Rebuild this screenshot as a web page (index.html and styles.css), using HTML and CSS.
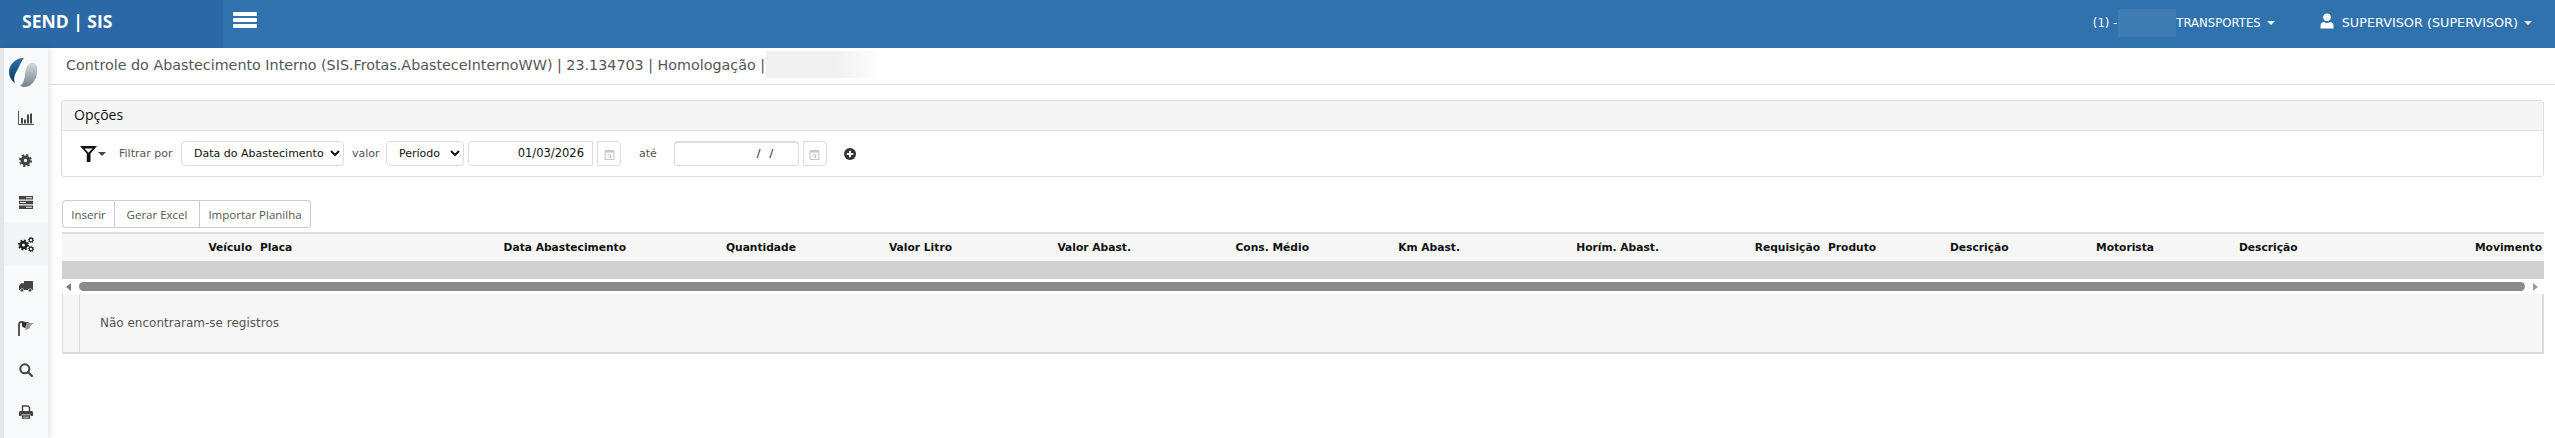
FILE: index.html
```html
<!DOCTYPE html>
<html lang="pt-BR">
<head>
<meta charset="utf-8">
<title>Controle do Abastecimento Interno</title>
<link rel="stylesheet" href="styles.css">
</head>
<body>
<header class="topbar">
  <div class="brand">SEND | SIS</div>
  <div class="burger"><span></span><span></span><span></span></div>
  <div class="top-right">
    <div class="company"><span>(1) -</span><span class="mask"></span><span>TRANSPORTES</span><i class="caret"></i></div>
    <div class="user">
      <svg class="user-icon" viewBox="0 0 14 16"><circle cx="7" cy="4.2" r="3.8" fill="#fff"/><path d="M0.5 15.5v-3c0-2.2 1.8-3.6 3.5-3.6 1 .8 2 1.1 3 1.1s2-.3 3-1.1c1.7 0 3.5 1.4 3.5 3.6v3z" fill="#fff"/></svg>
      <span>SUPERVISOR (SUPERVISOR)</span><i class="caret"></i>
    </div>
  </div>
</header>
<div class="layout">
  <nav class="sidebar">
    <div class="logo">
      <svg viewBox="0 0 28 29" width="28" height="29">
        <defs>
          <linearGradient id="lb" x1="0" y1="0" x2="0" y2="1"><stop offset="0" stop-color="#2f6ea3"/><stop offset="1" stop-color="#0d3a63"/></linearGradient>
          <linearGradient id="lg" x1="0" y1="0" x2="0" y2="1"><stop offset="0" stop-color="#d5dade"/><stop offset="1" stop-color="#74818b"/></linearGradient>
        </defs>
        <path d="M15 0C6 0 0 7 0 14c0 5 3 9 6 11-2-5 0-9 3-14 2-4 3-8 6-11z" fill="url(#lb)"/>
        <path d="M28 9c0-2-3-5-6-4-4 1-5 6-6 11-.5 5-1 9-5 12 2 .5 3 1 4 1 8 0 13-8 13-15z" fill="url(#lg)"/>
      </svg>
    </div>
    <a class="nav-item"><svg viewBox="0 0 16 14" width="16" height="14"><path d="M.5 0v13.500H16" fill="none" stroke="#555" stroke-width="1"/><path d="M3 7h2v5.500H3zM6 8.500h2v4H6zM9 3.500h2v9H9zM12 2.500h2v10h-2z" fill="#444"/></svg></a>
    <a class="nav-item"><svg viewBox="0 0 14 14" width="13" height="13"><circle cx="7" cy="7" r="3.600" fill="none" stroke="#444" stroke-width="3.600"/><circle cx="7" cy="7" r="6" fill="none" stroke="#444" stroke-width="2" stroke-dasharray="2.350 2.360"/></svg></a>
    <a class="nav-item"><svg viewBox="0 0 14 13" width="14" height="13"><path d="M0 0h14v3.500H0zM0 4.800h14v3.400H0zM0 9.500h14V13H0z" fill="#444"/><path d="M7 1.200h6v1H7zM1 6h6v1H1zM7 10.700h6v1H7z" fill="#f8f9fb"/></svg></a>
    <a class="nav-item active"><svg viewBox="0 0 16 15" width="16" height="15"><circle cx="5.500" cy="8" r="2.900" fill="none" stroke="#222" stroke-width="2.800"/><circle cx="5.500" cy="8" r="4.700" fill="none" stroke="#222" stroke-width="1.600" stroke-dasharray="1.850 1.840"/><circle cx="13" cy="3" r="1.800" fill="none" stroke="#222" stroke-width="1.200"/><circle cx="13" cy="3" r="2.700" fill="none" stroke="#222" stroke-width="1" stroke-dasharray="1 1.120"/><circle cx="13" cy="12" r="1.800" fill="none" stroke="#222" stroke-width="1.200"/><circle cx="13" cy="12" r="2.700" fill="none" stroke="#222" stroke-width="1" stroke-dasharray="1 1.120"/></svg></a>
    <a class="nav-item"><svg viewBox="0 0 14 11" width="14" height="11"><path d="M5 0h8.500c.3 0 .5.200.5.500V9H0V5l2-2.800h3z" fill="#444"/><circle cx="3" cy="9.300" r="1.700" fill="#444" stroke="#f8f9fb" stroke-width=".6"/><circle cx="11" cy="9.300" r="1.700" fill="#444" stroke="#f8f9fb" stroke-width=".6"/></svg></a>
    <a class="nav-item"><svg viewBox="0 0 16 15" width="16" height="15"><path d="M1 15V4c0-2 1-3.200 3-3.200" fill="none" stroke="#444" stroke-width="1.800"/><path d="M4 0l4 1.200 3-.2-3 3.500-.5 3L4 5.500z" fill="#333"/><path d="M8.500 2h7.200L12.500 5l-.5 2-4.500 2.500.5-5z" fill="#999"/></svg></a>
    <a class="nav-item"><svg viewBox="0 0 14 14" width="14" height="14"><circle cx="5.800" cy="5.800" r="4.500" fill="none" stroke="#444" stroke-width="2"/><path d="M9 9l4 4" stroke="#444" stroke-width="2.200" stroke-linecap="round"/></svg></a>
    <a class="nav-item"><svg viewBox="0 0 14 14" width="14" height="14"><path d="M3.500 6V1h5.500l1.500 1.500V6" fill="none" stroke="#444" stroke-width="1.400"/><path d="M0 7.500C0 6.500.7 6 1.500 6h11c.8 0 1.500.5 1.500 1.500V11h-2.500V9.500h-9V11H0z" fill="#444"/><path d="M3.500 11h7v2.200h-7z" fill="none" stroke="#444" stroke-width="1.300"/></svg></a>
  </nav>
  <main class="content">
    <div class="page-title">
      <span>Controle do Abastecimento Interno (SIS.Frotas.AbasteceInternoWW) | 23.134703 | Homologação |</span>
      <span class="title-mask"></span>
    </div>
    <section class="panel">
      <div class="panel-head">Opções</div>
      <div class="panel-body">
        <div class="filter-icon">
          <svg viewBox="0 0 17 16" width="17" height="16"><path d="M0 0h17l-6.500 7.500V16h-3.700V7.500zM4.500 2.500l4 4.300 4-4.300z" fill="#111" fill-rule="evenodd"/></svg>
          <i class="caret dark"></i>
        </div>
        <label class="lbl lbl-filter">Filtrar por</label>
        <select class="ctl sel-field"><option>Data do Abastecimento</option></select>
        <label class="lbl lbl-valor">valor</label>
        <select class="ctl sel-kind"><option>Período</option></select>
        <div class="ctl date-from">01/03/2026</div>
        <button class="cal"><svg viewBox="0 0 11 11" width="11" height="11"><path d="M1 1.500h9v9H1z" fill="#f4f4f4" stroke="#c9c9c9"/><path d="M1 1h9v2.500H1z" fill="#c9c9c9"/><path d="M4.500 6h2v2.500h-1" fill="none" stroke="#c4c4c4"/></svg></button>
        <label class="lbl lbl-ate">até</label>
        <div class="ctl date-to"><span>/</span><span>/</span></div>
        <button class="cal"><svg viewBox="0 0 11 11" width="11" height="11"><path d="M1 1.500h9v9H1z" fill="#f4f4f4" stroke="#c9c9c9"/><path d="M1 1h9v2.500H1z" fill="#c9c9c9"/><path d="M4.500 6h2v2.500h-1" fill="none" stroke="#c4c4c4"/></svg></button>
        <svg class="plus" viewBox="0 0 12 12" width="12" height="12"><circle cx="6" cy="6" r="6" fill="#333"/><path d="M2.700 6h6.600M6 2.700v6.600" stroke="#fff" stroke-width="2"/></svg>
      </div>
    </section>
    <div class="btn-group">
      <button class="btn b1">Inserir</button><button class="btn b2">Gerar Excel</button><button class="btn b3">Importar Planilha</button>
    </div>
    <section class="grid">
      <table class="grid-table">
        <colgroup>
          <col class="c1"><col class="c2"><col class="c3"><col class="c4"><col class="c5"><col class="c6"><col class="c7"><col class="c8"><col class="c9"><col class="c10"><col class="c11"><col class="c12"><col class="c13"><col class="c14"><col class="c15">
        </colgroup>
        <thead>
          <tr>
            <th class="r">Veículo</th><th>Placa</th><th class="r">Data Abastecimento</th><th class="r">Quantidade</th><th class="r">Valor Litro</th><th class="r">Valor Abast.</th><th class="r">Cons. Médio</th><th class="r">Km Abast.</th><th class="r">Horím. Abast.</th><th class="r">Requisição</th><th>Produto</th><th>Descrição</th><th>Motorista</th><th>Descrição</th><th class="r last">Movimento</th>
          </tr>
        </thead>
      </table>
      <div class="band"></div>
      <div class="hscroll">
        <i class="arrow left"></i>
        <div class="thumb"></div>
        <i class="arrow right"></i>
      </div>
      <div class="grid-body">
        <div class="gutter"></div>
        <div class="empty">Não encontraram-se registros</div>
      </div>
    </section>
  </main>
</div>
</body>
</html>
```
FILE: styles.css
```css
* { box-sizing: border-box; }
html, body { margin: 0; padding: 0; height: 100%; overflow: hidden; background: #fff; }
body { font-family: "DejaVu Sans", Verdana, sans-serif; font-size: 11px; color: #555; }

.topbar { height: 48px; background: #3072ae; display: flex; align-items: center; color: #fff; }
.brand { width: 223px; height: 48px; background: #2a69a6; padding-left: 22px; font: 700 17.500px/42px "Open Sans", sans-serif; white-space: nowrap; }
.burger { margin-left: 10px; width: 24px; display: flex; flex-direction: column; gap: 2px; margin-top: -8px; }
.burger span { height: 4px; background: #fff; border-radius: 1px; }
.top-right { margin-left: auto; display: flex; align-items: center; padding-right: 23px; font-size: 11.700px; margin-top: -3px; }
.company { display: flex; align-items: center; }
.mask { width: 58px; height: 28px; background: #3f7cb4; margin: 0 0 0 1px; }
.caret { display: inline-block; width: 0; height: 0; border: 4px solid transparent; border-top-color: #fff; border-bottom: 0; margin-left: 6px; }
.caret.dark { border-top-color: #444; margin-left: 1px; }
.user { display: flex; align-items: center; margin-left: 45px; font-size: 12.800px; }
.user-icon { width: 14px; height: 16px; margin-right: 8px; margin-top: -3px; }

.layout { display: flex; height: 390px; }
.sidebar { width: 48px; border-left: 4px solid #e6e6e6; background: #f8f9fb; box-shadow: 2px 0 6px rgba(0,0,0,.1); flex: none; }
.logo { height: 49px; padding: 10px 0 0 5px; }
.logo svg { display: block; }
.nav-item { height: 42px; display: flex; align-items: center; justify-content: center; padding-right: 1px; }
.nav-item.active { background: #f3f4f5; }

.content { flex: 1; min-width: 0; padding-right: 11px; }
.page-title { height: 37px; margin-right: -11px; border-bottom: 1px solid #ddd; padding: 0 0 3px 18px; display: flex; align-items: center; font-size: 14.300px; color: #555; white-space: nowrap; }
.title-mask { width: 117px; height: 27px; margin-left: 1px; background: linear-gradient(90deg, #f1f1f1 60%, #fff); }

.panel { margin: 15px 0 0 13px; border: 1px solid #ddd; border-radius: 3px; height: 77px; }
.panel-head { height: 30px; background: #f5f5f5; border-bottom: 1px solid #ddd; padding-left: 12px; font: 14px/27px "Open Sans", sans-serif; color: #111; }
.panel-body { display: flex; align-items: center; height: 45px; padding-left: 18px; }
.filter-icon { display: flex; align-items: center; width: 39px; }
.lbl { color: #555; white-space: nowrap; }
.lbl-filter { width: 62px; }
.lbl-valor { margin-left: 8px; width: 34px; }
.lbl-ate { margin: 0 17px 0 18px; }
.ctl { height: 25px; background: #fff; border: 1px solid #ddd; border-radius: 4px; font: 11px "DejaVu Sans", sans-serif; color: #111; }
.sel-field { width: 163px; padding-left: 8px; }
.sel-kind { width: 78px; padding-left: 8px; margin-right: 4px; }
.date-from { width: 125px; text-align: right; padding-right: 8px; line-height: 23px; border-radius: 4px 0 0 4px; font-size: 11.500px; }
.date-to { width: 125px; border-width: 2px 1px 1px; display: flex; gap: 9px; padding-left: 82px; line-height: 22px; }
.cal { width: 24px; height: 25px; margin-left: 4px; padding: 3px 0 0; background: #fff; border: 1px solid #ddd; border-radius: 0 4px 4px 0; }
.plus { margin-left: 17px; }

.btn-group { margin: 23px 0 0 14px; display: flex; }
.btn { height: 28px; background: #fff; border: 1px solid #ccc; border-left-width: 0; color: #555; font: 11.500px "Open Sans", sans-serif; padding: 0; }
.b1 { width: 53px; border-left-width: 1px; border-radius: 4px 0 0 4px; }
.b2 { width: 85px; }
.b3 { width: 111px; border-radius: 0 4px 4px 0; }

.grid { margin: 4px 0 0 14px; }
.grid-table { width: 100%; table-layout: fixed; border-collapse: collapse; border-top: 2px solid #ddd; background: #f6f6f6; }
.grid-table th { height: 28px; padding: 0 4px; text-align: left; font-size: 10.700px; font-weight: 700; color: #111; white-space: nowrap; }
.grid-table th.r { text-align: right; }
.grid-table th.last { padding-right: 2px; }
.c1 { width: 194px; } .c2 { width: 234px; } .c3 { width: 140px; } .c4 { width: 170px; }
.c5 { width: 156px; } .c6 { width: 179px; } .c7 { width: 178px; } .c8 { width: 151px; }
.c9 { width: 199px; } .c10 { width: 161px; } .c11 { width: 122px; } .c12 { width: 146px; }
.c13 { width: 143px; } .c14 { width: 144px; } .c15 { width: auto; }
.band { height: 18px; background: #d1d1d1; }
.hscroll { height: 15px; display: flex; align-items: center; background: #fff; position: relative; }
.arrow { width: 0; height: 0; border: 4px solid transparent; border-top-width: 4.500px; border-bottom-width: 4.500px; flex: none; }
.arrow.left { border-right: 5px solid #7d7d7d; border-left: 0; margin-left: 4px; }
.arrow.right { border-left: 5px solid #9a9a9a; border-right: 0; margin-right: 6px; margin-left: 8px; }
.thumb { flex: 1; height: 9px; background: #8b8b8b; border-radius: 5px; margin-left: 8px; }
.grid-body { display: flex; height: 60px; background: #f6f6f6; border: solid #ddd; border-width: 0 2px 2px 1px; }
.gutter { width: 17px; border-right: 1px solid #ddd; }
.empty { padding-left: 20px; line-height: 58px; font-size: 12px; color: #555; }
```
